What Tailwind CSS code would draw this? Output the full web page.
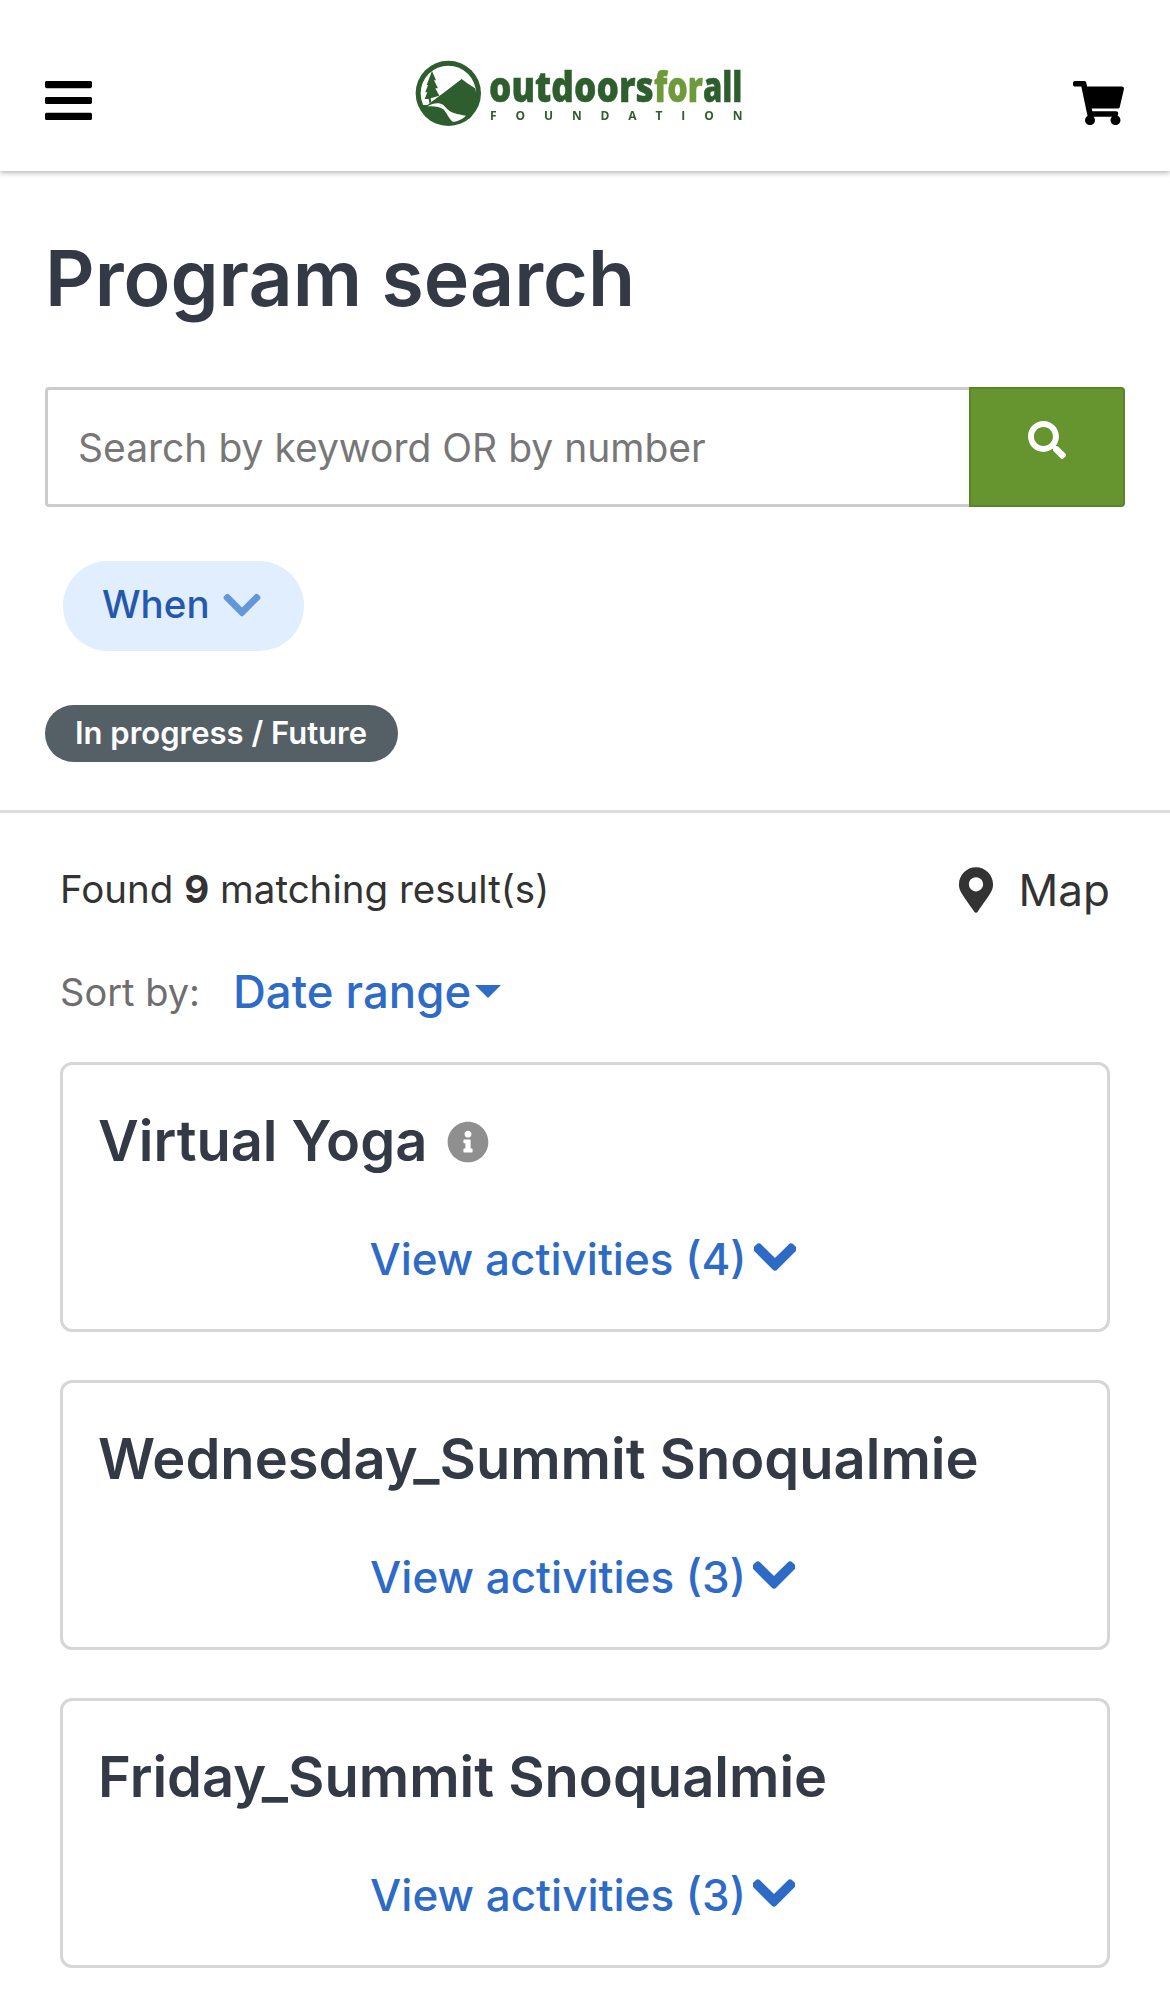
<!DOCTYPE html>
<html lang="en">
<head>
    <meta charset="UTF-8">
    <meta name="viewport" content="width=device-width, initial-scale=1.0">
    <title>Program search</title>
    <script src="https://cdn.jsdelivr.net/npm/@tailwindcss/browser@4"></script>
</head>
<body class="bg-white min-h-screen font-['Inter',sans-serif] text-[#343a45]">
    <!-- Header -->
    <header class="relative h-[171px] flex items-start justify-between pl-[45px] pr-[46px] pt-[81px] shadow-[0_2px_5px_rgba(0,0,0,0.28)]">
        <svg class="w-[47px] h-[39px]" viewBox="0 60 448 392" preserveAspectRatio="none" fill="#000"><path d="M16 132h416c8.837 0 16-7.163 16-16V76c0-8.837-7.163-16-16-16H16C7.163 60 0 67.163 0 76v40c0 8.837 7.163 16 16 16zm0 160h416c8.837 0 16-7.163 16-16v-40c0-8.837-7.163-16-16-16H16c-8.837 0-16 7.163-16 16v40c0 8.837 7.163 16 16 16zm0 160h416c8.837 0 16-7.163 16-16v-40c0-8.837-7.163-16-16-16H16c-8.837 0-16 7.163-16 16v40c0 8.837 7.163 16 16 16z"/></svg>

        <!-- Logo -->
        <svg class="absolute left-[415px] top-[38px] w-[345px] h-[110px] blur-[0.4px]" viewBox="0 -20 345 110">
            <g transform="translate(-5 -3) scale(0.3333)">
                <circle cx="115" cy="115" r="98" fill="#2e5e2d"/>
                <circle cx="115" cy="115" r="83" fill="#fff"/>
                <path d="M52 150 L108 108 L155 72 L172 85 L195 100 L205 140 L180 190 L115 205 L60 185 L35 150 Z" fill="#2e5e2d"/>
                <path d="M52 154 C70 142 90 142 100 150 C112 162 118 170 132 174 C145 178 155 180 168 182 C155 195 140 200 128 200 C115 190 112 175 100 163 C90 155 70 152 52 154 Z" fill="#fff"/>
                <path d="M66 48 L78 76 L72 76 L84 100 L76 100 L88 122 L62 130 L64 142 L58 144 L56 132 L44 132 L52 112 L46 112 L54 90 L50 90 Z" fill="#2e5e2d"/>
            </g>
            <g font-family="'Open Sans',sans-serif" font-weight="800" font-size="43" stroke-width="0.5">
                <text transform="translate(74 44) scale(0.82 1)" fill="#2e5e2d" stroke="#2e5e2d">outdoors</text>
                <text transform="translate(239 44) scale(0.75 1)" fill="#6f9a3c" stroke="#6f9a3c">for</text>
                <text transform="translate(288 44) scale(0.72 1)" fill="#2e5e2d" stroke="#2e5e2d">all</text>
            </g>
            <text x="75" y="62" letter-spacing="18.9" font-family="'Open Sans',sans-serif" font-weight="700" font-size="12" fill="#2e5e2d">FOUNDATION</text>
        </svg>

        <svg class="w-[51px] h-[44px]" viewBox="0 0 576 512" preserveAspectRatio="none" fill="#000"><path d="M528.12 301.319l47.273-208C578.806 78.301 567.391 64 551.99 64H159.208l-9.166-44.81C147.758 8.021 137.93 0 126.529 0H24C10.745 0 0 10.745 0 24v16c0 13.255 10.745 24 24 24h69.883l70.248 343.435C147.325 417.1 136 435.222 136 456c0 30.928 25.072 56 56 56s56-25.072 56-56c0-15.674-6.447-29.835-16.824-40h209.647C430.447 426.165 424 440.326 424 456c0 30.928 25.072 56 56 56s56-25.072 56-56c0-22.172-12.888-41.332-31.579-50.405l5.517-24.276c3.413-15.018-8.002-29.319-23.403-29.319H218.117l-6.545-32h293.145c11.206 0 20.92-7.754 23.403-18.681z"/></svg>
    </header>

    <main>
        <section class="px-[45px] pt-[65px] border-b-[3px] border-[#dedede] pb-[48px]">
            <h1 class="text-[77px] leading-[84px] font-semibold text-[#343a45]">Program search</h1>

            <div class="mt-[67px] flex h-[120px]">
                <input class="flex-1 min-w-0 border-[3px] border-r-0 border-[#cccccc] rounded-l-[4px] pl-[30px] pt-[3px] text-[39px] text-[#555] placeholder:text-[#777777] outline-none" placeholder="Search by keyword OR by number">
                <button class="w-[156px] flex justify-center pt-[32px] bg-[#66942e] border-[2px] border-[#5a8428] rounded-r-[4px]">
                    <svg class="w-[38px] h-[38px]" viewBox="0 0 512 512" fill="#fff"><path d="M505 442.7L405.3 343c-4.5-4.5-10.6-7-17-7H372c27.6-35.3 44-79.7 44-128C416 93.1 322.9 0 208 0S0 93.1 0 208s93.1 208 208 208c48.3 0 92.7-16.4 128-44v16.3c0 6.4 2.5 12.5 7 17l99.7 99.7c9.4 9.4 24.6 9.4 33.9 0l28.3-28.3c9.4-9.4 9.4-24.6.1-34zM208 336c-70.7 0-128-57.2-128-128 0-70.7 57.2-128 128-128 70.7 0 128 57.2 128 128 0 70.7-57.2 128-128 128z"/></svg>
                </button>
            </div>

            <div class="mt-[54px] ml-[18px] inline-flex items-center gap-[13px] h-[90px] w-[241px] pl-[39px] pb-[2px] rounded-[45px] bg-[#e0eefd] text-[38.5px] font-medium text-[#2558ad]">
                When
                <svg class="w-[38px] h-[44px]" viewBox="0 0 448 512" fill="#6497d8"><path d="M207.029 381.476L12.686 187.132c-9.373-9.373-9.373-24.569 0-33.941l22.667-22.667c9.357-9.357 24.522-9.375 33.901-.04L224 284.505l154.745-154.021c9.379-9.335 24.544-9.317 33.901.04l22.667 22.667c9.373 9.373 9.373 24.569 0 33.941L240.971 381.476c-9.373 9.372-24.569 9.372-33.942 0z"/></svg>
            </div>

            <div class="mt-[54px]">
                <span class="inline-flex items-center h-[57px] pl-[30px] pr-[31px] rounded-[29px] bg-[#555f66] text-white text-[31px] font-semibold">In progress / Future</span>
            </div>
        </section>

        <section class="px-[60px]">
            <div class="flex items-center justify-between mt-[52px] h-[50px]">
                <p class="text-[38.5px] text-[#333]">Found <span class="font-bold">9</span> matching result(s)</p>
                <div class="flex items-center gap-[26px] text-[44px] text-[#333]">
                    <svg class="w-[34px] h-[46px]" viewBox="0 0 384 512" fill="#333"><path d="M172.268 501.67C26.97 291.031 0 268.413 0 192 0 85.961 85.961 0 192 0s192 85.961 192 192c0 76.413-26.97 99.031-172.268 309.67-9.535 13.774-29.93 13.773-39.464 0zM192 272c44.183 0 80-35.817 80-80s-35.817-80-80-80-80 35.817-80 80 35.817 80 80 80z"/></svg>
                    Map
                </div>
            </div>

            <div class="flex items-center mt-[52px] h-[50px]">
                <span class="text-[38px] text-[#6e6e6e]">Sort by:</span>
                <span class="ml-[33px] text-[45.5px] font-medium text-[#2e6bc6]">Date range</span>
                <span class="ml-[4px] mt-[-2px] w-0 h-0 border-x-[13px] border-t-[13px] border-x-transparent border-t-[#2e6bc6]"></span>
            </div>

            <div class="mt-[45px] flex flex-col gap-[48px]">
                <article class="h-[270px] border-[3px] border-[#d6d6d6] rounded-[12px] px-[35px] pt-[41px]">
                    <div class="flex items-center gap-[20px]">
                        <h2 class="text-[56px] leading-[70px] font-semibold text-[#343a45]">Virtual Yoga</h2>
                        <svg class="w-[42px] h-[42px] mt-[2px]" viewBox="0 0 512 512" fill="#8f8f8f"><path d="M256 8C119.043 8 8 119.083 8 256c0 136.997 111.043 248 248 248s248-111.003 248-248C504 119.083 392.957 8 256 8zm0 110c23.196 0 42 18.804 42 42s-18.804 42-42 42-42-18.804-42-42 18.804-42 42-42zm56 254c0 6.627-5.373 12-12 12h-88c-6.627 0-12-5.373-12-12v-24c0-6.627 5.373-12 12-12h12v-64h-12c-6.627 0-12-5.373-12-12v-24c0-6.627 5.373-12 12-12h64c6.627 0 12 5.373 12 12v100h12c6.627 0 12 5.373 12 12v24z"/></svg>
                    </div>
                    <div class="mt-[55px] pr-[5px] flex justify-center items-center gap-[7px] text-[44px] leading-[56px] font-medium text-[#2e6bc6]">
                        View activities (4)
                        <svg class="w-[42px] h-[48px] mb-[4px]" viewBox="0 0 448 512" fill="#2e6bc6" stroke="#2e6bc6" stroke-width="24"><path d="M207.029 381.476L12.686 187.132c-9.373-9.373-9.373-24.569 0-33.941l22.667-22.667c9.357-9.357 24.522-9.375 33.901-.04L224 284.505l154.745-154.021c9.379-9.335 24.544-9.317 33.901.04l22.667 22.667c9.373 9.373 9.373 24.569 0 33.941L240.971 381.476c-9.373 9.372-24.569 9.372-33.942 0z"/></svg>
                    </div>
                </article>

                <article class="h-[270px] border-[3px] border-[#d6d6d6] rounded-[12px] px-[35px] pt-[41px]">
                    <h2 class="text-[56px] leading-[70px] font-semibold text-[#343a45]">Wednesday_Summit Snoqualmie</h2>
                    <div class="mt-[55px] pr-[5px] flex justify-center items-center gap-[7px] text-[44px] leading-[56px] font-medium text-[#2e6bc6]">
                        View activities (3)
                        <svg class="w-[42px] h-[48px] mb-[4px]" viewBox="0 0 448 512" fill="#2e6bc6" stroke="#2e6bc6" stroke-width="24"><path d="M207.029 381.476L12.686 187.132c-9.373-9.373-9.373-24.569 0-33.941l22.667-22.667c9.357-9.357 24.522-9.375 33.901-.04L224 284.505l154.745-154.021c9.379-9.335 24.544-9.317 33.901.04l22.667 22.667c9.373 9.373 9.373 24.569 0 33.941L240.971 381.476c-9.373 9.372-24.569 9.372-33.942 0z"/></svg>
                    </div>
                </article>

                <article class="h-[270px] border-[3px] border-[#d6d6d6] rounded-[12px] px-[35px] pt-[41px]">
                    <h2 class="text-[56px] leading-[70px] font-semibold text-[#343a45]">Friday_Summit Snoqualmie</h2>
                    <div class="mt-[55px] pr-[5px] flex justify-center items-center gap-[7px] text-[44px] leading-[56px] font-medium text-[#2e6bc6]">
                        View activities (3)
                        <svg class="w-[42px] h-[48px] mb-[4px]" viewBox="0 0 448 512" fill="#2e6bc6" stroke="#2e6bc6" stroke-width="24"><path d="M207.029 381.476L12.686 187.132c-9.373-9.373-9.373-24.569 0-33.941l22.667-22.667c9.357-9.357 24.522-9.375 33.901-.04L224 284.505l154.745-154.021c9.379-9.335 24.544-9.317 33.901.04l22.667 22.667c9.373 9.373 9.373 24.569 0 33.941L240.971 381.476c-9.373 9.372-24.569 9.372-33.942 0z"/></svg>
                    </div>
                </article>
            </div>
        </section>
    </main>
</body>
</html>
